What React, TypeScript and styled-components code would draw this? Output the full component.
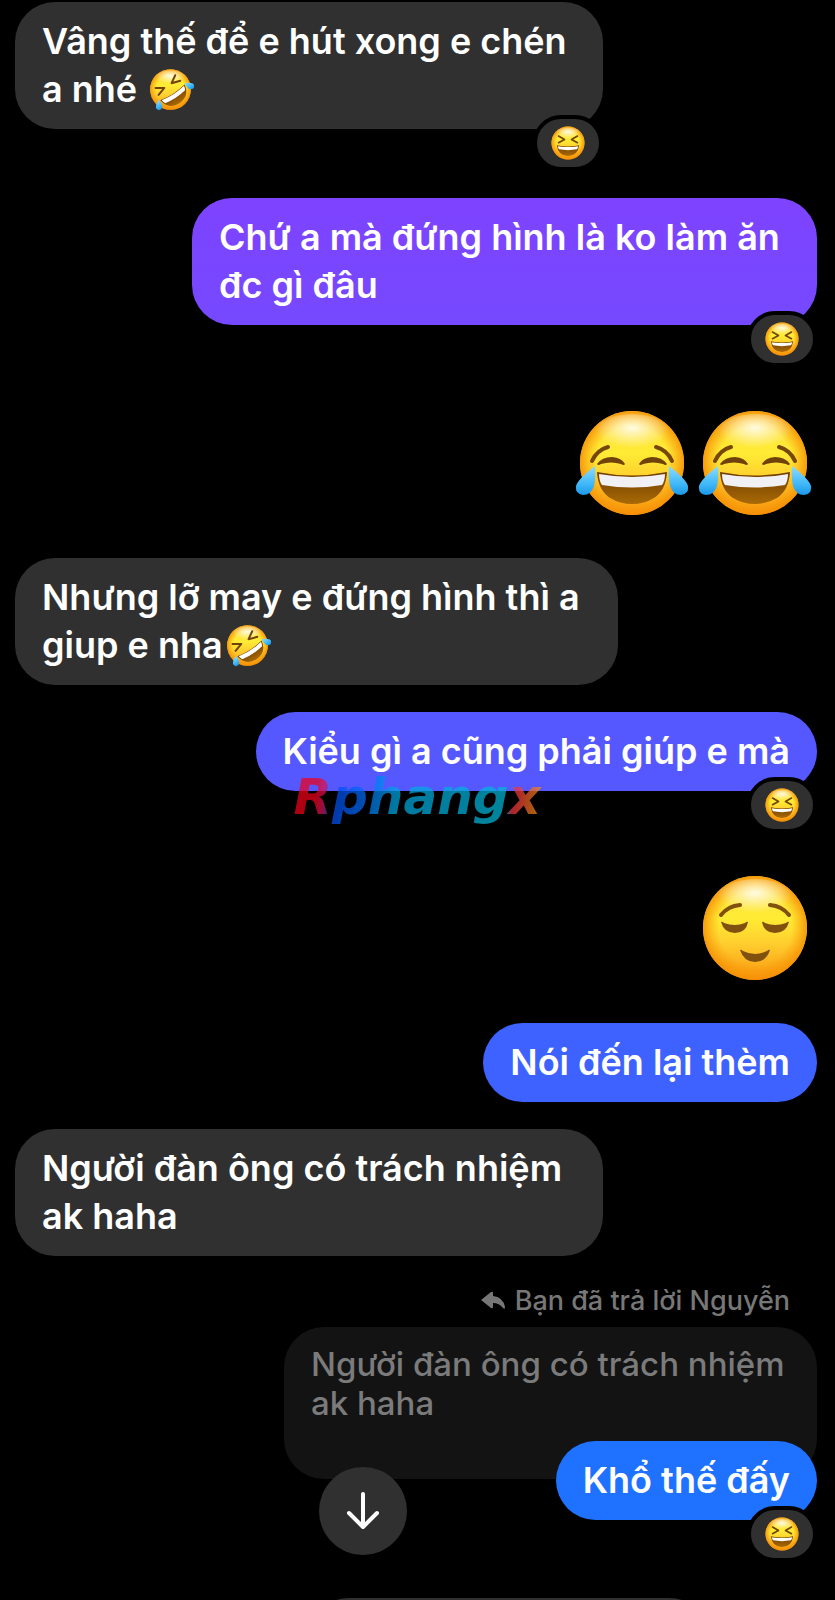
import React from "react";
import styled, { createGlobalStyle, css } from "styled-components";

const GlobalStyle = createGlobalStyle`
  *, *::before, *::after { box-sizing: border-box; }
  body {
    margin: 0;
    background: #000;
    color: #fff;
    font-family: Inter, "Liberation Sans", sans-serif;
  }
`;

const Chat = styled.main`
  position: relative;
  display: flex;
  flex-direction: column;
  padding: 2px 18px 0 15px;
  overflow: hidden;
`;

const Row = styled.div<{ $sent?: boolean; $gap: number }>`
  display: flex;
  justify-content: ${(p) => (p.$sent ? "flex-end" : "flex-start")};
  margin-bottom: ${(p) => p.$gap}px;
`;

const Bubble = styled.div<{ $color?: string; $width?: number }>`
  position: relative;
  max-width: 100%;
  ${(p) => p.$width && css`width: ${p.$width}px;`}
  padding: 15px 27px 16px;
  border-radius: 40px;
  background: ${(p) => p.$color ?? "#303030"};
  font-size: 36px;
  font-weight: 560;
  line-height: 48px;
  white-space: pre-line;
`;

const Badge = styled.span`
  position: absolute;
  right: 0;
  bottom: -42px;
  display: flex;
  align-items: center;
  justify-content: center;
  width: 70px;
  height: 56px;
  border: 4px solid #000;
  border-radius: 28px;
  background: #303030;
`;

const InlineEmoji = styled.span`
  display: inline-flex;
  height: 44px;
  margin: -4px 0 -4px 1px;
  vertical-align: -11px;
`;

const BigEmoji = styled.div`
  display: flex;
  justify-content: flex-end;
  gap: 3px;
  padding-right: 2px;
`;

const ReplyNote = styled.div`
  display: flex;
  align-items: center;
  justify-content: flex-end;
  gap: 10px;
  padding-right: 27px;
  margin-bottom: 9px;
  color: #777;
  font-size: 27px;
  font-weight: 500;
  line-height: 34px;
`;

const Quote = styled.blockquote`
  width: 533px;
  max-width: 100%;
  height: 152px;
  margin: 0 0 -38px auto;
  padding: 18px 27px;
  border-radius: 40px;
  background: #131313;
  color: #7b7b7b;
  font-size: 33px;
  font-weight: 500;
  line-height: 39px;
  white-space: pre-line;
`;

const ScrollButton = styled.button`
  position: absolute;
  left: 319px;
  bottom: 45px;
  display: flex;
  align-items: center;
  justify-content: center;
  width: 88px;
  height: 88px;
  padding: 0;
  border: 0;
  border-radius: 50%;
  background: #303030;
  color: #fff;
`;

const NextMessage = styled.div`
  width: 400px;
  height: 2px;
  margin: 0 auto;
  overflow: hidden;
  transform: translateX(93px);
  &::before {
    content: "";
    display: block;
    height: 79px;
    border-radius: 40px;
    background: #303030;
  }
`;

const Watermark = styled.span`
  position: absolute;
  left: 38px;
  top: 58px;
  background: linear-gradient(100deg, #f00018 0 10%, #e0104c 13%, #0050f0 19%, #0068f8 28%, #00a8e0 42%, #00b8d8 84%, #f03040 88%, #f09010 98%);
  background-clip: text;
  -webkit-background-clip: text;
  color: transparent;
  font: italic 700 50px/54px "DejaVu Sans", sans-serif;
  opacity: 0.72;
`;

const Gradients = styled.svg`
  position: absolute;
`;

const Defs = () => (
  <Gradients width="0" height="0" aria-hidden="true">
    <defs>
      <linearGradient id="face" x1="0" y1="0" x2="0" y2="1">
        <stop offset="0" stopColor="#ffd83a" />
        <stop offset="0.4" stopColor="#ffec35" />
        <stop offset="0.65" stopColor="#ffce2e" />
        <stop offset="1" stopColor="#f8960f" />
      </linearGradient>
      <radialGradient id="rim" cx="0.5" cy="0.5" r="0.5">
        <stop offset="0.7" stopColor="#f99a05" stopOpacity="0" />
        <stop offset="1" stopColor="#f68f05" stopOpacity="0.85" />
      </radialGradient>
      <radialGradient id="shine" cx="0.5" cy="0.35" r="0.5">
        <stop offset="0" stopColor="#fff" stopOpacity="0.85" />
        <stop offset="1" stopColor="#fff" stopOpacity="0" />
      </radialGradient>
      <linearGradient id="tear" x1="0" y1="0" x2="0" y2="1">
        <stop offset="0" stopColor="#8fdcff" />
        <stop offset="0.6" stopColor="#42b9f8" />
        <stop offset="1" stopColor="#1b97ea" />
      </linearGradient>
      <linearGradient id="mouth" x1="0" y1="0" x2="0" y2="1">
        <stop offset="0" stopColor="#6f3c00" />
        <stop offset="1" stopColor="#a96a05" />
      </linearGradient>
    </defs>
  </Gradients>
);

const Face = () => (
  <>
    <circle cx="60" cy="60" r="52" fill="url(#face)" />
    <circle cx="60" cy="60" r="52" fill="url(#rim)" />
    <ellipse cx="60" cy="31" rx="38" ry="20" fill="url(#shine)" />
  </>
);

const Joy = () => (
  <svg width="120" height="120" viewBox="0 0 120 120" role="img" aria-label="😂">
    <Face />
    <path d="M20 58Q25 47 36 44M100 58Q95 47 84 44" fill="none" stroke="#77470a" strokeWidth="4" strokeLinecap="round" />
    <path d="M25 61Q30 54 40 54Q50 55 53 61Q52 63 49 61Q39 58 29 61Q26 63 25 61ZM95 61Q90 54 80 54Q70 55 67 61Q68 63 71 61Q81 58 91 61Q94 63 95 61Z" fill="#6f420b" />
    <path d="M25 69Q60 76 95 69Q94 87 82 95Q72 101 60 101Q48 101 38 95Q26 87 25 69Z" fill="url(#mouth)" />
    <path d="M27 71Q60 77 93 71Q93 78 90 82Q60 87 30 82Q27 78 27 71Z" fill="#f1f0f5" />
    <path d="M23 63Q24 74 22 83Q19 92 11 92Q3 91 4 83Q6 76 23 63ZM97 63Q96 74 98 83Q101 92 109 92Q117 91 116 83Q114 76 97 63Z" fill="url(#tear)" />
  </svg>
);

const Relieved = () => (
  <svg width="120" height="120" viewBox="0 0 120 120" role="img" aria-label="😌">
    <Face />
    <path d="M26 47Q33 38 45 37M94 47Q87 38 75 37" fill="none" stroke="#80500f" strokeWidth="4" strokeLinecap="round" />
    <path d="M26 54Q27 53 29 55Q40 59 50 55Q52 53 53 54Q51 65 40 65Q29 65 26 54ZM94 54Q93 53 91 55Q80 59 70 55Q68 53 67 54Q69 65 80 65Q91 65 94 54Z" fill="#80500f" />
    <path d="M45 82Q46 81 48 83Q60 89 72 83Q74 81 75 82Q71 94 60 94Q49 94 45 82Z" fill="#80500f" />
  </svg>
);

const Laugh = () => (
  <svg width="38" height="38" viewBox="0 0 120 120" role="img" aria-label="😆">
    <Face />
    <path d="M30 38L49 49L30 59M90 38L71 49L90 59" fill="none" stroke="#70430a" strokeWidth="5" strokeLinecap="round" strokeLinejoin="round" />
    <path d="M25 67Q60 75 95 67Q92 100 60 101Q28 100 25 67Z" fill="url(#mouth)" />
    <path d="M28 70Q60 76 92 70Q91 77 88 80Q60 85 32 80Q29 77 28 70Z" fill="#fff" />
  </svg>
);

const Rofl = () => (
  <svg width="47" height="47" viewBox="0 0 120 120" role="img" aria-label="🤣">
    <Face />
    <g transform="rotate(-33 60 60)">
      <path d="M30 36L49 48L27 55M90 36L71 48L93 55" fill="none" stroke="#70430a" strokeWidth="5" strokeLinecap="round" strokeLinejoin="round" />
      <path d="M23 69Q60 77 97 69Q92 101 60 102Q28 101 23 69Z" fill="url(#mouth)" />
      <path d="M26 71Q60 78 94 71Q93 78 90 82Q60 88 30 82Q27 78 26 71Z" fill="#fff" />
      <path d="M21 66Q22 76 20 83Q16 91 8 89Q1 85 4 78Q8 71 21 66ZM99 66Q98 76 100 83Q104 91 112 89Q119 85 116 78Q112 71 99 66Z" fill="url(#tear)" />
    </g>
  </svg>
);

const Reaction = () => (
  <Badge>
    <Laugh />
  </Badge>
);

export default function App() {
  return (
    <>
      <GlobalStyle />
      <Defs />
      <Chat>
        <Row $gap={69}>
          <Bubble $width={588}>
            {"Vâng thế để e hút xong e chén\na nhé "}
            <InlineEmoji><Rofl /></InlineEmoji>
            <Reaction />
          </Bubble>
        </Row>
        <Row $sent $gap={78}>
          <Bubble $width={625} $color="linear-gradient(#7e43ff, #7549ff)">
            {"Chứ a mà đứng hình là ko làm ăn\nđc gì đâu"}
            <Reaction />
          </Bubble>
        </Row>
        <Row $sent $gap={35}>
          <BigEmoji><Joy /><Joy /></BigEmoji>
        </Row>
        <Row $gap={27}>
          <Bubble $width={603}>
            {"Nhưng lỡ may e đứng hình thì a\ngiup e nha"}
            <InlineEmoji><Rofl /></InlineEmoji>
          </Bubble>
        </Row>
        <Row $sent $gap={77}>
          <Bubble $color="#5558ff">
            Kiểu gì a cũng phải giúp e mà
            <Watermark>Rphangx</Watermark>
            <Reaction />
          </Bubble>
        </Row>
        <Row $sent $gap={35}>
          <BigEmoji><Relieved /></BigEmoji>
        </Row>
        <Row $sent $gap={27}>
          <Bubble $color="#3d62ff">Nói đến lại thèm</Bubble>
        </Row>
        <Row $gap={28}>
          <Bubble $width={588}>{"Người đàn ông có trách nhiệm\nak haha"}</Bubble>
        </Row>
        <ReplyNote>
          <svg width="24" height="20" viewBox="0 0 24 20" fill="currentColor" aria-hidden="true">
            <path d="M0 9L10 1Q12 0 12 2V5Q22 6 24 16Q24 19 22 17Q18 12 12 12V16Q12 18 10 17Z" />
          </svg>
          Bạn đã trả lời Nguyễn
        </ReplyNote>
        <Quote>{"Người đàn ông có trách nhiệm\nak haha"}</Quote>
        <Row $sent $gap={78}>
          <Bubble $color="#1e72ff">
            Khổ thế đấy
            <Reaction />
          </Bubble>
        </Row>
        <NextMessage />
        <ScrollButton aria-label="Cuộn xuống cuối">
          <svg width="36" height="40" viewBox="0 0 36 40" fill="none" stroke="currentColor" strokeWidth="4" strokeLinecap="round" strokeLinejoin="round" aria-hidden="true">
            <path d="M18 3V36M4 22L18 36L32 22" />
          </svg>
        </ScrollButton>
      </Chat>
    </>
  );
}
